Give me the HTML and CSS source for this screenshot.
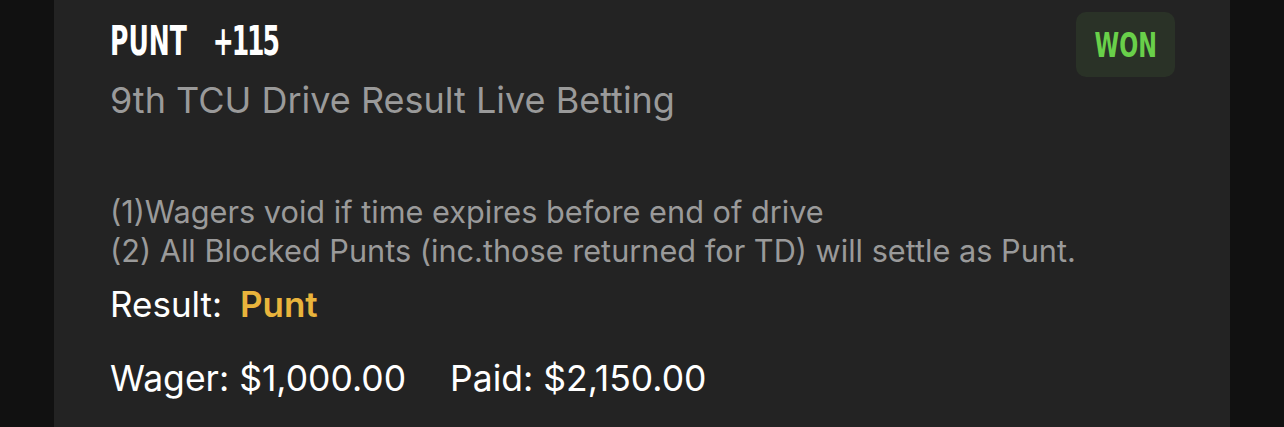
FILE: index.html
```html
<!DOCTYPE html>
<html lang="en">
  <head>
    <meta charset="utf-8">
    <meta name="viewport" content="width=device-width">
    <title>Bet Slip</title>
    <link rel="stylesheet" href="styles.css">
  </head>
  <body>

    <div class="page">
      <div class="bet-card">

        <div class="bet-head">
          <div class="bet-title">
            <h1 class="pick">
              <span class="pick-name">PUNT</span>
              <span class="pick-odds">+115</span>
            </h1>
            <p class="market">9th TCU Drive Result Live Betting</p>
          </div>
          <div class="status won"><span>WON</span></div>
        </div>

        <div class="rules">
          (1)Wagers void if time expires before end of drive<br>
          (2) All Blocked Punts (inc.those returned for TD) will settle as Punt.
        </div>

        <div class="result">
          Result: <span class="result-value">Punt</span>
        </div>

        <div class="amounts">
          <span>Wager: $1,000.00</span>
          <span>Paid: $2,150.00</span>
        </div>

      </div>
    </div>

  </body>
</html>
```

FILE: styles.css
```css
body {
  margin: 0;
  background-color: #111111;
  overflow: hidden;
  font-family: 'Inter', 'Liberation Sans', sans-serif;
}

.page
{
  padding: 0 54px;
  height: 427px;
}

.bet-card
{
  background-color: #232323;
  height: 100%;
  padding: 0 56px;
  box-sizing: border-box;
}

.bet-head
{
  display: flex;
  justify-content: space-between;
  align-items: flex-start;
}

/* headline font is squeezed to get the narrow scoreboard look */
.pick
{
  margin: 0;
  padding-top: 17px;
  display: flex;
  gap: 38px;
  font-family: 'DejaVu Sans Condensed', 'DejaVu Sans', sans-serif;
  font-stretch: condensed;
  font-weight: bold;
  font-size: 41px;
  line-height: 48px;
  color: #ffffff;
  transform: scaleX(0.68);
  transform-origin: left top;
}

.pick-odds
{
  letter-spacing: -3px;
}

.market
{
  margin: 15px 0 0 0;
  font-size: 36px;
  line-height: 40px;
  color: #9a9a9a;
}

.status
{
  margin-top: 12px;
  margin-right: -1px;
  width: 99px;
  height: 65px;
  border-radius: 10px;
  display: flex;
  align-items: center;
  justify-content: center;
  font-family: 'DejaVu Sans Condensed', 'DejaVu Sans', sans-serif;
  font-stretch: condensed;
  font-weight: bold;
  font-size: 34px;
}

.status span
{
  display: inline-block;
  transform: scaleX(0.73);
}

.won
{
  background-color: #2a3227;
  color: #69d04a;
}

.rules
{
  margin-top: 72px;
  font-size: 30.7px;
  line-height: 39px;
  color: #9a9a9a;
}

.result
{
  margin-top: 14px;
  font-size: 35px;
  line-height: 40px;
  color: #ffffff;
}

.result-value
{
  margin-left: 8px;
  color: #e9b43c;
  font-weight: 600;
}

.amounts
{
  margin-top: 35px;
  display: flex;
  gap: 44px;
  font-size: 35.5px;
  line-height: 40px;
  color: #ffffff;
}
```
